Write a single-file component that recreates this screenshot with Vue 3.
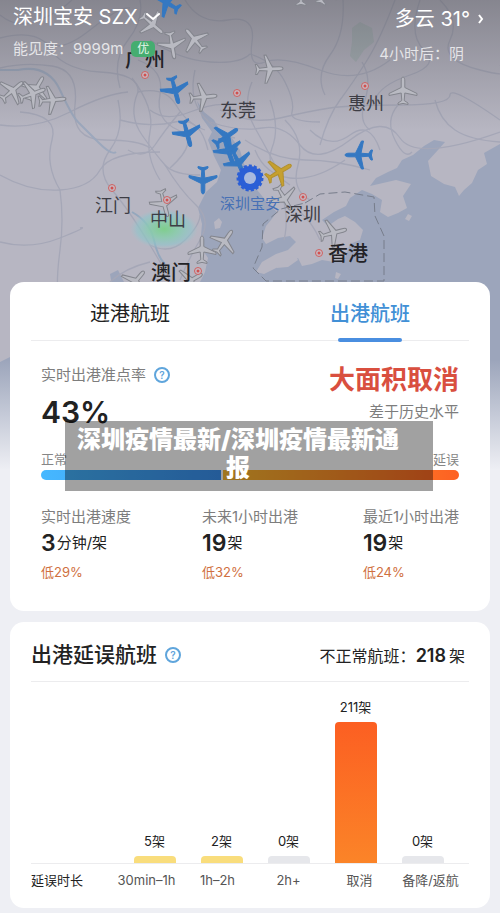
<script setup>
import { ref } from 'vue'

const tab = ref('out')

const cities = [
  { name: '广州', x: 145, y: 67, px: 145, py: 75, big: true },
  { name: '东莞', x: 238, y: 117, px: 237, py: 93 },
  { name: '惠州', x: 366, y: 110, px: 365, py: 86 },
  { name: '江门', x: 113, y: 212, px: 112, py: 188 },
  { name: '中山', x: 168, y: 226, px: 167, py: 200 },
  { name: '深圳', x: 303, y: 221, px: 303, py: 197 },
  { name: '澳门', x: 171, y: 280, px: 198, py: 271, big: true },
  { name: '香港', x: 348, y: 261, px: 319, py: 253, big: true },
]

// r is the heading in degrees, 0 = north
const planes = [
  { x: 12, y: 91, r: 50 },
  { x: 36, y: 89, r: 30 },
  { x: 32, y: 94, r: 70 },
  { x: 52, y: 100, r: 85 },
  { x: 152, y: 24, r: 130 },
  { x: 172, y: 45, r: 170 },
  { x: 195, y: 40, r: 320 },
  { x: 203, y: 97, r: 85 },
  { x: 269, y: 69, r: 88 },
  { x: 403, y: 91, r: 0 },
  { x: 301, y: -8, r: 0 },
  { x: 325, y: -9, r: 20 },
  { x: 164, y: 203, r: 165 },
  { x: 202, y: 250, r: 0 },
  { x: 224, y: 242, r: 35 },
  { x: 284, y: 198, r: 150 },
  { x: 333, y: 233, r: 75 },
  { x: 135, y: 282, r: 40 },
  { x: 190, y: 281, r: 60 },
  { x: 167, y: 3, r: 300, kind: 'blue' },
  { x: 175, y: 90, r: 165, kind: 'blue' },
  { x: 187, y: 133, r: 165, kind: 'blue' },
  { x: 226, y: 137, r: 55, kind: 'blue' },
  { x: 203, y: 180, r: 180, kind: 'blue' },
  { x: 228, y: 150, r: 160, kind: 'blue' },
  { x: 238, y: 162, r: 155, kind: 'blue' },
  { x: 359, y: 155, r: 270, kind: 'blue' },
  { x: 279, y: 172, r: 60, kind: 'yellow' },
]

const roads = [
  'M0 38 Q30 30 45 42 T90 30 T130 8',
  'M0 68 Q25 62 52 66 T75 105 T105 140 T150 148',
  'M0 15 Q18 30 40 20 T72 0',
  'M45 42 Q60 70 100 72 T138 92',
  'M0 125 Q35 130 70 112 T128 92',
  'M0 175 Q30 192 60 190 T100 170 T160 152',
  'M60 190 Q64 220 60 250 T58 300 T30 350',
  'M0 242 Q30 250 60 238 T80 228',
  'M60 190 Q45 165 52 140 T20 112',
  'M120 88 Q112 60 128 40 T140 0',
  'M138 92 Q128 115 142 135 T165 165 T200 175',
  'M138 92 Q165 86 176 105 T205 130',
  'M138 60 Q165 70 160 95 T178 130 T170 168',
  'M118 100 Q125 130 110 150 T112 190 T150 245 T170 282',
  'M150 40 Q180 60 210 62 T250 54',
  'M150 110 Q165 122 190 112 T230 105',
  'M120 120 Q150 128 175 122 T208 150',
  'M128 150 Q145 160 155 145 T180 112',
  'M132 78 Q155 108 150 132 T160 180',
  'M195 70 Q188 100 205 118 T235 138',
  'M185 0 Q200 25 228 20 T252 42 T265 62 T320 70 T390 60',
  'M343 0 Q345 35 330 55 T325 95',
  'M395 0 Q380 40 366 62 T340 100 T320 145',
  'M420 0 Q408 35 424 50 T410 75 T375 100',
  'M250 54 Q275 62 285 82 T292 112 T320 122',
  'M220 110 Q250 125 280 118 T330 108 T400 105 T450 95 T500 120',
  'M210 122 Q240 132 262 128 T300 145 T350 140 T400 138 T500 132',
  'M252 82 Q242 105 255 128 T275 165',
  'M270 100 Q280 128 272 148 T290 185',
  'M285 120 Q305 140 298 165 T310 200',
  'M245 140 Q275 160 305 160 T370 170',
  'M310 130 Q330 150 350 135 T380 150',
  'M398 105 Q385 120 395 140 T412 152',
  'M440 0 Q460 20 450 40 T480 70 T500 65',
  'M362 62 Q372 78 365 100 T370 130',
  'M435 100 Q440 120 455 130 T500 142',
  'M165 165 Q180 190 196 205 T200 240 T180 280',
  'M150 245 Q170 255 185 240 T200 215',
  'M110 282 Q125 268 150 262',
  'M280 190 Q290 215 284 240',
  'M255 150 Q265 175 290 178 T345 160',
  'M300 212 Q312 222 320 240',
]

const stats = [
  { label: '实时出港速度', value: '3', unit: '分钟/架', diff: '低29%' },
  { label: '未来1小时出港', value: '19', unit: '架', diff: '低32%' },
  { label: '最近1小时出港', value: '19', unit: '架', diff: '低24%' },
]

const delays = [
  { label: '30min–1h', count: 5, kind: 'minor' },
  { label: '1h–2h', count: 2, kind: 'minor' },
  { label: '2h+', count: 0, kind: 'none' },
  { label: '取消', count: 211, kind: 'major' },
  { label: '备降/返航', count: 0, kind: 'none' },
]

// small counts keep a visible stub
function barHeight(count) {
  return Math.max(7, Math.round(count * 141 / 211))
}
</script>

<template>
  <div class="page">
    <svg class="map" viewBox="0 0 500 480" preserveAspectRatio="xMidYMin slice" aria-hidden="true">
      <defs>
        <linearGradient id="shade" x1="0" y1="0" x2="0" y2="1">
          <stop offset="0" stop-color="#55555c" stop-opacity="0.5" />
          <stop offset="1" stop-color="#55555c" stop-opacity="0" />
        </linearGradient>
        <linearGradient id="fade" x1="0" y1="0" x2="0" y2="1">
          <stop offset="0" stop-color="#eeeff4" stop-opacity="0" />
          <stop offset="1" stop-color="#eeeff4" />
        </linearGradient>
        <radialGradient id="rain">
          <stop offset="0" stop-color="#7fce8c" />
          <stop offset="0.45" stop-color="#8accb0" stop-opacity="0.85" />
          <stop offset="0.8" stop-color="#8fc5cc" stop-opacity="0.6" />
          <stop offset="1" stop-color="#9fc3cc" stop-opacity="0" />
        </radialGradient>
        <path
          id="plane"
          d="M0 -14 C1.2 -14 1.8 -12 1.8 -10 V-3.5 L14 2.5 V4.5 L1.8 2 L1.2 9.5 L5 12 V13.5 L0 12.4 L-5 13.5 V12 L-1.2 9.5 L-1.8 2 L-14 4.5 V2.5 L-1.8 -3.5 V-10 C-1.8 -12 -1.2 -14 0 -14 Z"
        />
      </defs>

      <rect width="500" height="480" fill="#b7b6c2" />

      <g fill="#9ca5bb">
        <path d="M197 101 L204 112 L214 120 L222 134 L232 138 L240 150 L244 164 L250 174 L254 186 L262 196 L270 206 L277 212 L271 220 L266 226 L262 238 L266 244 L278 238 L290 236 L296 242 L288 250 L276 254 L262 262 L256 272 L264 274 L284 264 L298 258 L302 266 L312 264 L322 260 L334 262 L345 258 L350 244 L360 240 L363 230 L355 222 L345 216 L338 219 L328 226 L322 220 L334 212 L346 206 L350 198 L362 190 L372 194 L382 200 L380 212 L388 217 L398 213 L407 208 L403 196 L411 184 L396 180 L370 186 L376 178 L388 172 L397 168 L402 160 L413 155 L424 146 L434 140 L445 142 L438 150 L428 161 L431 176 L444 184 L455 187 L459 196 L464 190 L472 183 L478 170 L487 164 L484 153 L500 144 V480 H0 V362 L14 355 L30 320 L110 300 L112 286 L110 274 L118 270 L124 282 L160 290 L198 286 L205 272 L208 258 L200 246 L202 224 L198 208 L206 192 L217 182 L221 170 L214 156 L208 140 L212 132 L202 118 Z" />
      </g>
      <g fill="#b7b6c2">
        <path d="M214 222 l5 -4 3 4 -2 6 -5 1 Z" />
        <path d="M408 214 l4 2 -3 5 -4 -2 Z" />
        <path d="M288 259 l8 -3 2 4 -10 7 -12 1 Z" />
        <path d="M336 272 l5 2 -3 5 -3 -1 Z" />
      </g>

      <path d="M352 28 l8 -6 12 6 2 14 -10 8 -8 12 -6 -6 2 -14 Z" fill="#98aba8" opacity="0.5" />
      <g fill="none" stroke="#a5a7b7" stroke-width="1.3">
        <path v-for="(d, i) in roads" :key="i" :d="d" />
      </g>
      <path d="M0 70 H18 Q48 64 60 90 T78 122 T98 142 T116 152" fill="none" stroke="#9ca8bd" stroke-width="2" />
      <path d="M132 212 Q150 222 154 240 T165 264" fill="none" stroke="#94a7bd" stroke-width="2" />
      <ellipse cx="164" cy="229" rx="34" ry="20" fill="url(#rain)" />
      <path
        d="M305 203 L320 194 L345 192 L374 197 L375 216 L384 236 V281 H266 L253 268 L262 247 L263 224 L281 209 Z"
        fill="none"
        stroke="#777d8b"
        stroke-width="1"
        stroke-dasharray="9 4"
      />
      <rect width="500" height="130" fill="url(#shade)" />
      <rect y="360" width="500" height="110" fill="url(#fade)" />
      <rect y="469" width="500" height="11" fill="#eeeff4" />

      <use
        v-for="(p, i) in planes"
        :key="i"
        href="#plane"
        :class="['plane', p.kind]"
        :transform="`translate(${p.x} ${p.y}) rotate(${p.r})`"
      />

      <g v-for="c in cities" :key="c.name">
        <circle :cx="c.px" :cy="c.py" r="3.5" fill="#c5bac4" stroke="#d0605f" stroke-width="1" />
        <circle :cx="c.px" :cy="c.py" r="1.5" fill="#d0504f" />
        <text :x="c.x" :y="c.y" :class="['city', { big: c.big }]">{{ c.name }}</text>
      </g>
      <text x="250" y="209" class="airport">深圳宝安</text>

      <circle cx="250" cy="178" r="12" fill="#2b5fd6" />
      <circle cx="250" cy="178" r="12" fill="none" stroke="#2b5fd6" stroke-width="3" stroke-dasharray="3 2" />
      <circle cx="250" cy="178" r="6" fill="#a9b9de" />
    </svg>

    <header class="hero">
      <div>
        <button class="airport-btn">
          深圳宝安 SZX
          <svg width="14" height="8" viewBox="0 0 14 8" fill="none" stroke="#fff" stroke-width="2" stroke-linecap="round" stroke-linejoin="round">
            <path d="M1 1 L7 6 L13 1" />
          </svg>
        </button>
        <p class="sub">能见度：9999m <span class="badge">优</span></p>
      </div>
      <div class="weather">
        <a class="weather-link" href="#">
          多云 31°
          <svg width="6" height="10" viewBox="0 0 6 10" fill="none" stroke="#fff" stroke-width="2">
            <path d="M1 1 L4 5 L1 9" />
          </svg>
        </a>
        <p class="sub later">4小时后：阴</p>
      </div>
    </header>

    <main>
      <section class="card">
        <nav class="tabs">
          <button :class="['tab', { active: tab === 'in' }]" @click="tab = 'in'">进港航班</button>
          <button :class="['tab', { active: tab === 'out' }]" @click="tab = 'out'">出港航班</button>
        </nav>

        <div class="summary">
          <div class="rate">
            <div>
              <div class="muted with-help">
                实时出港准点率
                <button class="help" aria-label="准点率说明">?</button>
              </div>
              <div class="percent">43%</div>
            </div>
            <div class="status">
              <div class="alert">大面积取消</div>
              <div class="muted">差于历史水平</div>
            </div>
          </div>

          <div class="legend">
            <span>正常</span>
            <span>延误</span>
          </div>
          <div class="meter">
            <i class="ok" :style="{ width: '43%' }"></i>
            <i class="late"></i>
          </div>

          <div class="stats">
            <div v-for="s in stats" :key="s.label">
              <div class="muted">{{ s.label }}</div>
              <div class="stat-value"><b>{{ s.value }}</b>{{ s.unit }}</div>
              <div class="diff">{{ s.diff }}</div>
            </div>
          </div>

          <div class="banner">深圳疫情最新/深圳疫情最新通报</div>
        </div>
      </section>

      <section class="card delays">
        <div class="delays-head">
          <h2>出港延误航班</h2>
          <button class="help" aria-label="延误航班说明">?</button>
          <span class="total">不正常航班：<b>218</b>架</span>
        </div>
        <div class="plot">
          <div v-for="d in delays" :key="d.label" class="col">
            <span>{{ d.count }}架</span>
            <i :class="['bar', d.kind]" :style="{ height: barHeight(d.count) + 'px' }"></i>
          </div>
        </div>
        <div class="axis">
          <span class="axis-title">延误时长</span>
          <span v-for="d in delays" :key="d.label">{{ d.label }}</span>
        </div>
      </section>
    </main>
  </div>
</template>

<style>
body {
  margin: 0;
  background: #eeeff4;
}
</style>

<style scoped>
.page {
  position: relative;
  overflow: hidden;
  padding-bottom: 5px;
  font-family: Inter, 'Noto Sans CJK SC', sans-serif;
  font-size: 15px;
  color: #222;
}

button {
  padding: 0;
  border: none;
  background: none;
  font: inherit;
  color: inherit;
  cursor: pointer;
}

p,
h2 {
  margin: 0;
}

.map {
  position: absolute;
  top: 0;
  left: 0;
  width: 100%;
  height: 480px;
}

.city {
  font-size: 18px;
  fill: #3d3d45;
  text-anchor: middle;
}

.city.big {
  font-size: 20px;
  font-weight: 500;
  fill: #222226;
}

.airport {
  font-size: 15px;
  fill: #4670b5;
  text-anchor: middle;
}

.plane {
  fill: #b9bac2;
  stroke: #83858d;
  stroke-width: 1;
}

.plane.blue {
  fill: #3478c2;
  stroke: #3478c2;
}

.plane.yellow {
  fill: #c6a02f;
  stroke: #b28f2c;
}

.hero {
  position: relative;
  display: flex;
  justify-content: space-between;
  box-sizing: border-box;
  height: 282px;
  padding: 3px 16px 0 13px;
  color: #fff;
}

.airport-btn,
.weather-link {
  display: flex;
  align-items: center;
  gap: 8px;
  font-size: 20px;
  font-weight: 400;
  line-height: 28px;
  color: #fff;
  text-decoration: none;
}

.sub {
  display: flex;
  align-items: center;
  gap: 8px;
  margin-top: 7px;
  line-height: 22px;
  color: rgba(255, 255, 255, 0.75);
}

.badge {
  padding: 0 6px;
  border-radius: 5px;
  background: #45ad70;
  font-size: 12px;
  line-height: 16px;
  color: #e4f5ea;
}

.weather {
  padding-top: 2px;
}

.weather-link {
  justify-content: flex-end;
}

.later {
  margin-top: 10px;
  padding-right: 20px;
}

main {
  position: relative;
  display: grid;
  gap: 11px;
  padding: 0 10px;
}

.card {
  border-radius: 14px;
  background: #fff;
}

.tabs {
  position: relative;
  display: grid;
  grid-template-columns: 1fr 1fr;
}

.tabs::before {
  content: '';
  position: absolute;
  right: 21px;
  bottom: 1px;
  left: 21px;
  height: 1px;
  background: #ececee;
}

.tab {
  position: relative;
  height: 60px;
  font-size: 20px;
}

.tab.active {
  font-weight: 500;
  color: #4190d6;
}

.tab.active::after {
  content: '';
  position: absolute;
  bottom: 0;
  left: 50%;
  width: 64px;
  height: 4px;
  margin-left: -32px;
  border-radius: 2px;
  background: #4a8ee0;
}

.summary {
  position: relative;
  padding: 22px 31px 29px;
}

.rate {
  display: flex;
  justify-content: space-between;
}

.muted {
  line-height: 22px;
  color: #7d7d7d;
}

.with-help {
  display: flex;
  align-items: center;
  gap: 8px;
}

.help {
  box-sizing: border-box;
  width: 16px;
  height: 16px;
  border: 2px solid #5fa5dc;
  border-radius: 50%;
  font-size: 10px;
  font-weight: 600;
  line-height: 12px;
  color: #5fa5dc;
}

.percent {
  margin-top: 8px;
  font-size: 30px;
  font-weight: 600;
  line-height: 36px;
}

.status {
  text-align: right;
}

.alert {
  margin-bottom: 5px;
  font-size: 26px;
  font-weight: 700;
  line-height: 32px;
  color: #d94f3f;
}

.legend {
  display: flex;
  justify-content: space-between;
  margin-top: 20px;
  font-size: 13px;
  line-height: 18px;
  color: #868686;
}

.meter {
  display: flex;
  gap: 2px;
  height: 10px;
  margin-top: 2px;
  border-radius: 5px;
  overflow: hidden;
}

.ok {
  background: linear-gradient(90deg, #46b8ff, #3a90f0);
}

.late {
  flex: 1;
  background: linear-gradient(90deg, #fdbb30, #fd6022);
}

.stats {
  display: grid;
  grid-template-columns: 1fr 1fr auto;
  margin-top: 26px;
}

.stat-value {
  display: flex;
  align-items: center;
  line-height: 30px;
}

.stat-value b {
  margin-right: 1px;
  font-size: 23px;
  font-weight: 600;
}

.diff {
  margin-top: 4px;
  font-size: 13px;
  line-height: 20px;
  color: #d07040;
}

.banner {
  position: absolute;
  top: 79px;
  right: 57px;
  left: 55px;
  box-sizing: border-box;
  height: 70px;
  padding: 5px 34px 0 12px;
  background: rgba(0, 0, 0, 0.37);
  font-size: 24px;
  font-weight: 900;
  line-height: 28px;
  text-align: center;
  color: #fff;
}

.delays {
  padding: 0 21px 18px;
}

.delays-head {
  display: flex;
  align-items: center;
  gap: 8px;
  box-sizing: border-box;
  height: 60px;
  padding: 6px 4px 0 0;
  border-bottom: 1px solid #ececee;
}

h2 {
  font-size: 21px;
  font-weight: 500;
  line-height: 30px;
}

.total {
  margin-left: auto;
  font-size: 16px;
}

.total b {
  margin-right: 3px;
  font-size: 18px;
  font-weight: 600;
}

.plot {
  display: grid;
  grid-template-columns: repeat(5, 1fr);
  align-items: end;
  height: 181px;
  padding: 0 13px 0 90px;
  border-bottom: 1px solid #ececee;
}

.col {
  display: flex;
  flex-direction: column;
  align-items: center;
  gap: 6px;
  font-size: 13px;
  line-height: 18px;
}

.bar {
  width: 42px;
  border-radius: 4px 4px 0 0;
}

.minor {
  background: #f9dd7c;
}

.none {
  background: #e6e7eb;
}

.major {
  background: linear-gradient(#fc5f22, #fb8428);
}

.axis {
  display: grid;
  grid-template-columns: 80px repeat(5, 1fr);
  padding: 6px 3px 0 0;
  font-size: 13px;
  line-height: 20px;
  text-align: center;
  white-space: nowrap;
  color: #555;
}

.axis-title {
  text-align: left;
  color: #222;
}
</style>
